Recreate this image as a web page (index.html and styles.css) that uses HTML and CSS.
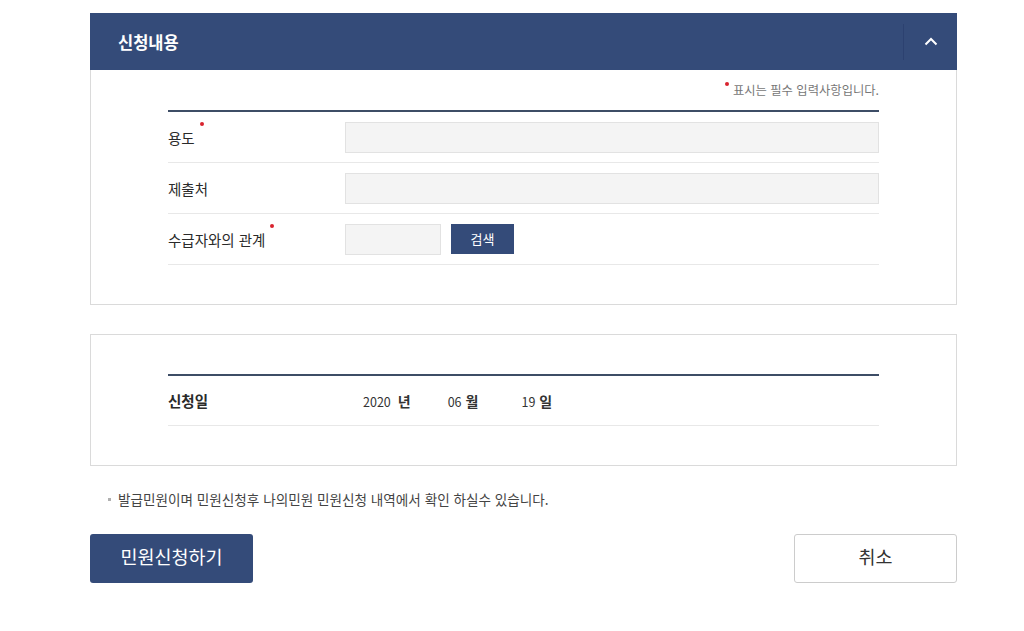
FILE: index.html
```html
<!DOCTYPE html>
<html lang="ko">
<head>
<meta charset="utf-8">
<title>신청내용</title>
<link rel="stylesheet" href="styles.css">
</head>
<body>
<div class="page">
  <section class="panel">
    <div class="panel-head">
      <h2 class="panel-title">신청내용</h2>
      <button class="toggle" type="button" aria-label="접기">
        <svg width="14" height="9" viewBox="0 0 14 9"><polyline points="1.5,7.5 7,2 12.5,7.5" fill="none" stroke="#ffffff" stroke-width="2"/></svg>
      </button>
    </div>
    <div class="panel-body">
      <p class="req-note"><span class="dot"></span>표시는 필수 입력사항입니다.</p>
      <div class="form-table">
        <div class="row">
          <div class="label">용도<span class="dot"></span></div>
          <div class="field"><span class="input wide"></span></div>
        </div>
        <div class="row">
          <div class="label">제출처</div>
          <div class="field"><span class="input wide"></span></div>
        </div>
        <div class="row">
          <div class="label">수급자와의 관계<span class="dot"></span></div>
          <div class="field"><span class="input short"></span><button class="btn-search" type="button">검색</button></div>
        </div>
      </div>
    </div>
  </section>

  <section class="panel panel-date">
    <div class="panel-body">
      <div class="form-table">
        <div class="row row-date">
          <div class="label strong">신청일</div>
          <div class="field date">
            <span class="d-group g-year"><span class="num">2020</span><span class="unit">년</span></span>
            <span class="d-group g-month"><span class="num">06</span><span class="unit">월</span></span>
            <span class="d-group g-day"><span class="num">19</span><span class="unit">일</span></span>
          </div>
        </div>
      </div>
    </div>
  </section>

  <p class="info"><span class="bullet"></span>발급민원이며 민원신청후 나의민원 민원신청 내역에서 확인 하실수 있습니다.</p>

  <div class="actions">
    <button class="btn btn-primary" type="button">민원신청하기</button>
    <button class="btn btn-cancel" type="button">취소</button>
  </div>
</div>
</body>
</html>
```

FILE: styles.css
```css
* { box-sizing: border-box; }
html, body { margin: 0; padding: 0; background: #ffffff; }
body {
  font-family: "Noto Sans CJK KR", "Noto Sans", sans-serif;
  color: #333333;
}
.page {
  width: 957px;
  padding: 13px 0 0 90px;
}
.panel {
  width: 867px;
  border: 1px solid #dadada;
  background: #fff;
}
.panel-head {
  display: flex;
  align-items: center;
  height: 57px;
  margin: -1px -1px 0 -1px;
  background: #344b79;
}
.panel-title {
  flex: 1;
  margin: 0;
  padding-left: 28px;
  font-size: 16.5px;
  font-weight: 700;
  line-height: 20px;
  color: #ffffff;
}
.toggle {
  width: 54px;
  height: 36px;
  padding: 0;
  border: 0;
  border-left: 1px solid #2c4170;
  background: transparent;
  display: flex;
  align-items: center;
  justify-content: center;
}
.panel-body {
  padding: 0 77px 39px;
}
.req-note {
  margin: 0;
  padding-top: 10px;
  height: 30px;
  line-height: 20px;
  text-align: right;
  font-size: 12.3px;
  color: #777777;
}
.req-note .dot { margin-right: 4px; margin-left: 0; }
.dot {
  display: inline-block;
  width: 4px;
  height: 4px;
  border-radius: 50%;
  background: #d9232e;
  vertical-align: top;
  margin-left: 5px;
  margin-top: 2px;
}
.form-table {
  border-top: 2px solid #3d4d66;
  margin-top: 10px;
}
.row {
  display: flex;
  align-items: center;
  height: 51px;
  border-bottom: 1px solid #e8e8e8;
}
.label {
  width: 177px;
  font-size: 14.5px;
  line-height: 20px;
  color: #2a2a2a;
  padding-top: 2px;
}
.label .dot { margin-top: -6px; }
.label.strong { font-weight: 700; padding-top: 0; }
.field {
  flex: 1;
  display: flex;
  align-items: center;
}
.input {
  display: block;
  height: 31px;
  background: #f4f4f4;
  border: 1px solid #e2e2e2;
}
.input.wide { width: 534px; }
.input.short { width: 96px; }
.btn-search {
  margin-left: 10px;
  width: 63px;
  height: 30px;
  border: 0;
  background: #344b79;
  color: #ffffff;
  font-family: inherit;
  font-size: 13px;
  padding: 0 0 2px;
}
.panel-date { margin-top: 29px; }
.panel-date .panel-body { padding-top: 39px; }
.panel-date .form-table { margin-top: 0; }
.row-date { height: 50px; }
.date { padding-left: 18px; }
.d-group { display: inline-flex; align-items: baseline; }
.g-month { margin-left: 37px; }
.g-day { margin-left: 43px; }
.num { font-size: 12.5px; color: #333; }
.unit { font-size: 14px; font-weight: 700; margin-left: 7px; color: #333; }
.g-month .unit, .g-day .unit { margin-left: 4px; }
.info {
  margin: 23px 0 0;
  padding-left: 18px;
  line-height: 20px;
  font-size: 13.6px;
  color: #444444;
  display: flex;
  align-items: center;
}
.bullet {
  display: inline-block;
  width: 3px;
  height: 3px;
  background: #b0b0b0;
  margin-right: 7px;
}
.actions {
  width: 867px;
  display: flex;
  justify-content: space-between;
  margin-top: 25px;
}
.btn {
  width: 163px;
  height: 49px;
  border-radius: 3px;
  font-family: inherit;
  font-size: 18.5px;
  padding: 0 0 5px;
}
.btn-primary {
  background: #344b79;
  border: 0;
  color: #ffffff;
}
.btn-cancel {
  background: #ffffff;
  border: 1px solid #cccccc;
  color: #333333;
}
```
